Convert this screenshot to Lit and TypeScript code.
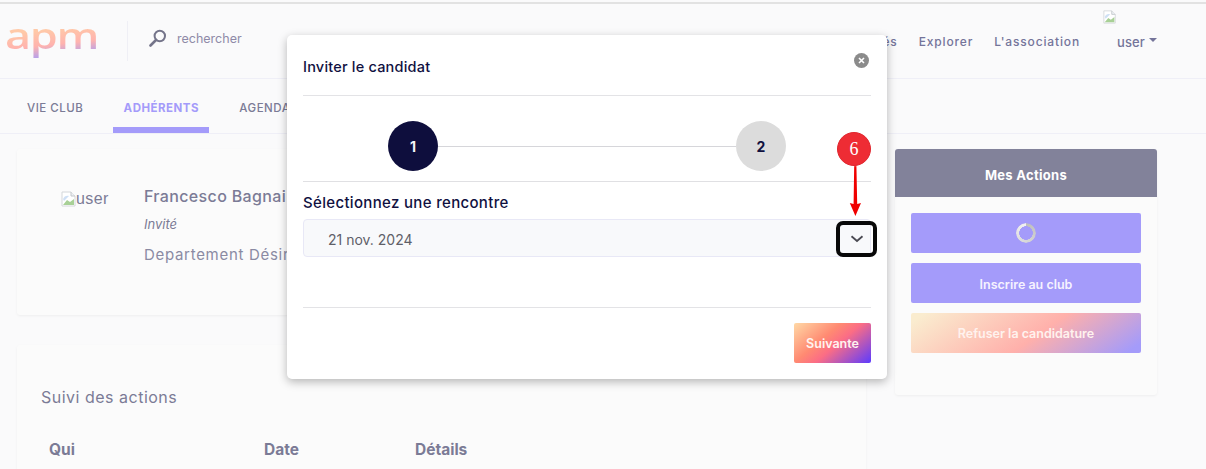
import { LitElement, html, css, svg } from 'lit';
import { customElement } from 'lit/decorators.js';

const brokenImg = html`<svg class="broken" width="16" height="16" viewBox="0 0 16 16">
  <path d="M1 1h9l4 4v10H1z" fill="#fff" stroke="#d4d7da" stroke-width="1"/>
  <path d="M10 1v4h4" fill="#eef1f4" stroke="#c4c8cc" stroke-width="1"/>
  <path d="M2 14l4-5 3 2 4-3v6z" fill="#a8d096"/>
  <path d="M2 8c1-3 4-4 6-3l-5 5z" fill="#cfe0f5"/>
</svg>`;

@customElement('app-root')
export class AppRoot extends LitElement {
  static styles = css`
    :host {
      display: block;
      position: relative;
      width: 1206px;
      height: 469px;
      overflow: hidden;
      background: #fafafb;
      font-family: Inter, "Open Sans", sans-serif;
      color: #7b7b96;
    }
    .strip { height: 2px; margin-top: 2px; background: #e2e2e2; }

    header {
      height: 74px;
      display: flex;
      align-items: center;
      padding: 0 40px 0 5px;
      border-bottom: 1px solid #efeff7;
    }
    .logo {
      width: 122px;
      font-family: "Open Sans", sans-serif;
      font-size: 36px;
      font-weight: 600;
      line-height: 50px;
      letter-spacing: -1px;
      transform: scaleX(1.25);
      transform-origin: left center;
      margin-top: -10px;
      background: linear-gradient(172deg, #ffc9a8 35%, #ffb3ae 58%, #a49bfa 80%);
      -webkit-background-clip: text;
      background-clip: text;
      color: transparent;
    }
    .divider { width: 1px; height: 40px; background: #efeff5; margin-right: 21px; }
    .search { display: flex; align-items: center; gap: 10px; font-size: 12.5px; color: #8f8aa8; margin-top: -6px; }
    nav {
      margin-left: auto;
      display: flex;
      align-items: center;
      font-size: 12px;
      font-weight: 500;
      letter-spacing: 0.85px;
      color: #74749a;
    }
    nav span { margin-right: 21px; }
    nav span:nth-child(3) { margin-right: 37px; }
    .user {
      position: relative;
      width: 49px;
      font-size: 13px;
      letter-spacing: 0.1px;
      display: flex;
      align-items: center;
      gap: 4px;
      margin-top: 1px;
    }
    .user svg.broken { position: absolute; left: -14px; top: -24px; width: 14px; height: 14px; }
    .caret { width: 0; height: 0; border: 4px solid transparent; border-top-color: #74749a; border-bottom: 0; margin-top: -3px; }

    .tabs {
      height: 54px;
      display: flex;
      padding-left: 17px;
      gap: 20px;
      border-bottom: 1px solid #efeff7;
      font-size: 11.5px;
      font-weight: 500;
      letter-spacing: 0.5px;
    }
    .tab { padding: 22px 10px 0; width: max-content; }
    .tab.on { color: #a49bfa; font-weight: 700; padding: 22px 0 0; width: 96px; box-sizing: border-box; text-align: center; height: 54px; border-bottom: 6px solid #a49bfa; }

    .main {
      display: grid;
      grid-template-columns: 849px 262px;
      column-gap: 29px;
      padding: 15px 0 0 17px;
    }
    .left { display: flex; flex-direction: column; gap: 30px; }
    .card { background: #fbfbfb; box-shadow: 0 1px 3px rgba(0, 0, 0, 0.05); border-radius: 3px; }
    .profile { height: 166px; box-sizing: border-box; display: flex; padding: 37px 0 0 44px; }
    .avatar { width: 83px; display: flex; align-items: center; height: 20px; margin-top: 3px; font-family: "Liberation Sans", sans-serif; font-size: 16px; letter-spacing: 0.4px; color: #7b7b96; }
    .avatar svg { margin-right: -1px; }
    .name { font-size: 16px; font-weight: 500; line-height: 20px; letter-spacing: 0.35px; white-space: nowrap; }
    .status { font-size: 13px; font-style: italic; margin-top: 8px; line-height: 20px; }
    .dep { font-size: 15px; margin-top: 11px; line-height: 20px; letter-spacing: 0.7px; white-space: nowrap; color: #8a8aa3; }
    .follow { padding: 41px 24px 0; height: 200px; box-sizing: border-box; }
    .follow h2 { margin: 0; font-size: 16px; font-weight: 400; line-height: 22px; letter-spacing: 0.5px; }
    .cols { display: grid; grid-template-columns: 215px 151px auto; padding: 31px 8px 0; font-size: 15.5px; font-weight: 700; line-height: 22px; }

    .actions { height: 246px; }
    .actions h3 { margin: 0; height: 48px; line-height: 53px; background: #82829a; color: #fff; text-align: center; font-size: 13px; font-weight: 700; letter-spacing: 0.3px; border-radius: 3px 3px 0 0; }
    .btns { display: flex; flex-direction: column; padding: 16px; gap: 10px; }
    .btn { height: 40px; border-radius: 2px; background: #a49bfa; color: #f6f2ff; font-size: 12.5px; font-weight: 600; display: flex; align-items: center; justify-content: center; padding-top: 3px; box-sizing: border-box; }
    .btn.grad { background: linear-gradient(145deg, #faeccf 5%, #ffb0ab 55%, #a49bfa 95%); color: #fff2ee; padding-top: 1px; }
    .spin { width: 20px; height: 20px; box-sizing: border-box; border-radius: 50%; margin-top: -3px; background: conic-gradient(#bdbdbd, #f2f2f2); -webkit-mask: radial-gradient(circle, transparent 6.6px, #000 7px); mask: radial-gradient(circle, transparent 6.6px, #000 7px); }

    .modal {
      position: absolute;
      left: 287px;
      top: 35px;
      width: 600px;
      height: 344px;
      box-sizing: border-box;
      padding: 0 16px;
      background: #fff;
      border-radius: 5px;
      box-shadow: 0 3px 10px rgba(0, 0, 0, 0.28);
      display: flex;
      flex-direction: column;
      color: #10103f;
    }
    .m-head { height: 60px; flex: none; border-bottom: 1px solid #e3e3e6; display: flex; justify-content: space-between; }
    .m-head h4 { margin: 23px 0 0; font-size: 14.5px; font-weight: 500; line-height: 18px; letter-spacing: 0.2px; }
    .close { width: 15px; height: 15px; margin: 18px 2px 0 0; }
    .stepper { height: 86px; flex: none; box-sizing: border-box; border-bottom: 1px solid #e0e0e3; display: flex; align-items: center; justify-content: center; padding-top: 15px; }
    .step { width: 50px; height: 50px; flex: none; border-radius: 50%; display: flex; align-items: center; justify-content: center; font-size: 14px; font-weight: 700; background: #0e0e3d; color: #f4f4f8; }
    .step.off { background: #dcdcdc; color: #10103f; }
    .line { width: 298px; height: 1px; background: #d6d6da; }
    label { font-size: 15px; font-weight: 500; line-height: 20px; margin-top: 11px; letter-spacing: 0.33px; }
    .select { height: 38px; flex: none; box-sizing: border-box; margin-top: 6px; background: #f8f9fb; border: 1px solid #e8e8f6; border-radius: 4px; padding: 3px 0 0 24px; display: flex; align-items: center; font-size: 14px; color: #5f5f68; }
    .m-foot { margin-top: 50px; border-top: 1px solid #e3e3e6; padding-top: 15px; display: flex; justify-content: flex-end; }
    .next { width: 77px; height: 40px; border-radius: 2px; background: linear-gradient(140deg, #ffd9a6 0%, #ff8a72 38%, #fb6d85 55%, #5b3bff 100%); color: #fff3f0; display: flex; align-items: center; justify-content: center; font-size: 12.5px; font-weight: 600; }

    .marker { position: absolute; left: 820px; top: 125px; width: 70px; height: 140px; }
    .badge { position: absolute; left: 837px; top: 132px; width: 34px; height: 34px; box-sizing: border-box; border-radius: 50%; background: #ee2c34; border: 1px solid #e0262e; box-shadow: 0 0 2px rgba(255, 255, 255, 0.6); color: #fff; font-family: "Liberation Serif", serif; font-size: 18px; display: flex; align-items: center; justify-content: center; }
    .frame { position: absolute; left: 836px; top: 221px; width: 41px; height: 36px; box-sizing: border-box; border: 4px solid #080808; border-radius: 7px; display: flex; align-items: center; justify-content: center; }
  `;

  render() {
    return html`
      <div class="strip"></div>
      <header>
        <div class="logo">apm</div>
        <div class="divider"></div>
        <div class="search">
          <svg width="18" height="18" viewBox="0 0 18 18" fill="none">
            <circle cx="10.8" cy="7" r="5.2" stroke="#74748a" stroke-width="2"/>
            <path d="M7 11L1.5 16.5" stroke="#74748a" stroke-width="2.6" stroke-linecap="round"/>
          </svg>
          rechercher
        </div>
        <nav>
          <span>Activités</span>
          <span>Explorer</span>
          <span>L'association</span>
          <div class="user">${brokenImg}user<i class="caret"></i></div>
        </nav>
      </header>
      <div class="tabs">
        <div class="tab">VIE CLUB</div>
        <div class="tab on">ADHÉRENTS</div>
        <div class="tab">AGENDA</div>
      </div>
      <div class="main">
        <div class="left">
          <section class="card profile">
            <div class="avatar">${brokenImg}user</div>
            <div>
              <div class="name">Francesco Bagnai</div>
              <div class="status">Invité</div>
              <div class="dep">Departement Désiré</div>
            </div>
          </section>
          <section class="card follow">
            <h2>Suivi des actions</h2>
            <div class="cols"><span>Qui</span><span>Date</span><span>Détails</span></div>
          </section>
        </div>
        <aside class="card actions">
          <h3>Mes Actions</h3>
          <div class="btns">
            <div class="btn"><div class="spin"></div></div>
            <div class="btn">Inscrire au club</div>
            <div class="btn grad">Refuser la candidature</div>
          </div>
        </aside>
      </div>

      <div class="modal">
        <div class="m-head">
          <h4>Inviter le candidat</h4>
          <svg class="close" viewBox="0 0 15 15">
            <circle cx="7.5" cy="7.5" r="7.5" fill="#8b8b8b"/>
            <path d="M5 5l5 5M10 5l-5 5" stroke="#fff" stroke-width="1.6"/>
          </svg>
        </div>
        <div class="stepper">
          <div class="step">1</div>
          <div class="line"></div>
          <div class="step off">2</div>
        </div>
        <label>Sélectionnez une rencontre</label>
        <div class="select">21 nov. 2024</div>
        <div class="m-foot"><div class="next">Suivante</div></div>
      </div>

      <svg class="marker" viewBox="0 0 70 140">
        ${svg`<path d="M34.2 40L36.4 40L37.2 79L41 78L35.4 91L29.8 78L33.6 79z" fill="#f00000"/>`}
      </svg>
      <div class="badge">6</div>
      <div class="frame">
        <svg width="14" height="8" viewBox="0 0 14 8" fill="none">
          <path d="M1.5 1.2L7 6L12.5 1.2" stroke="#4a4a52" stroke-width="1.8"/>
        </svg>
      </div>
    `;
  }
}
